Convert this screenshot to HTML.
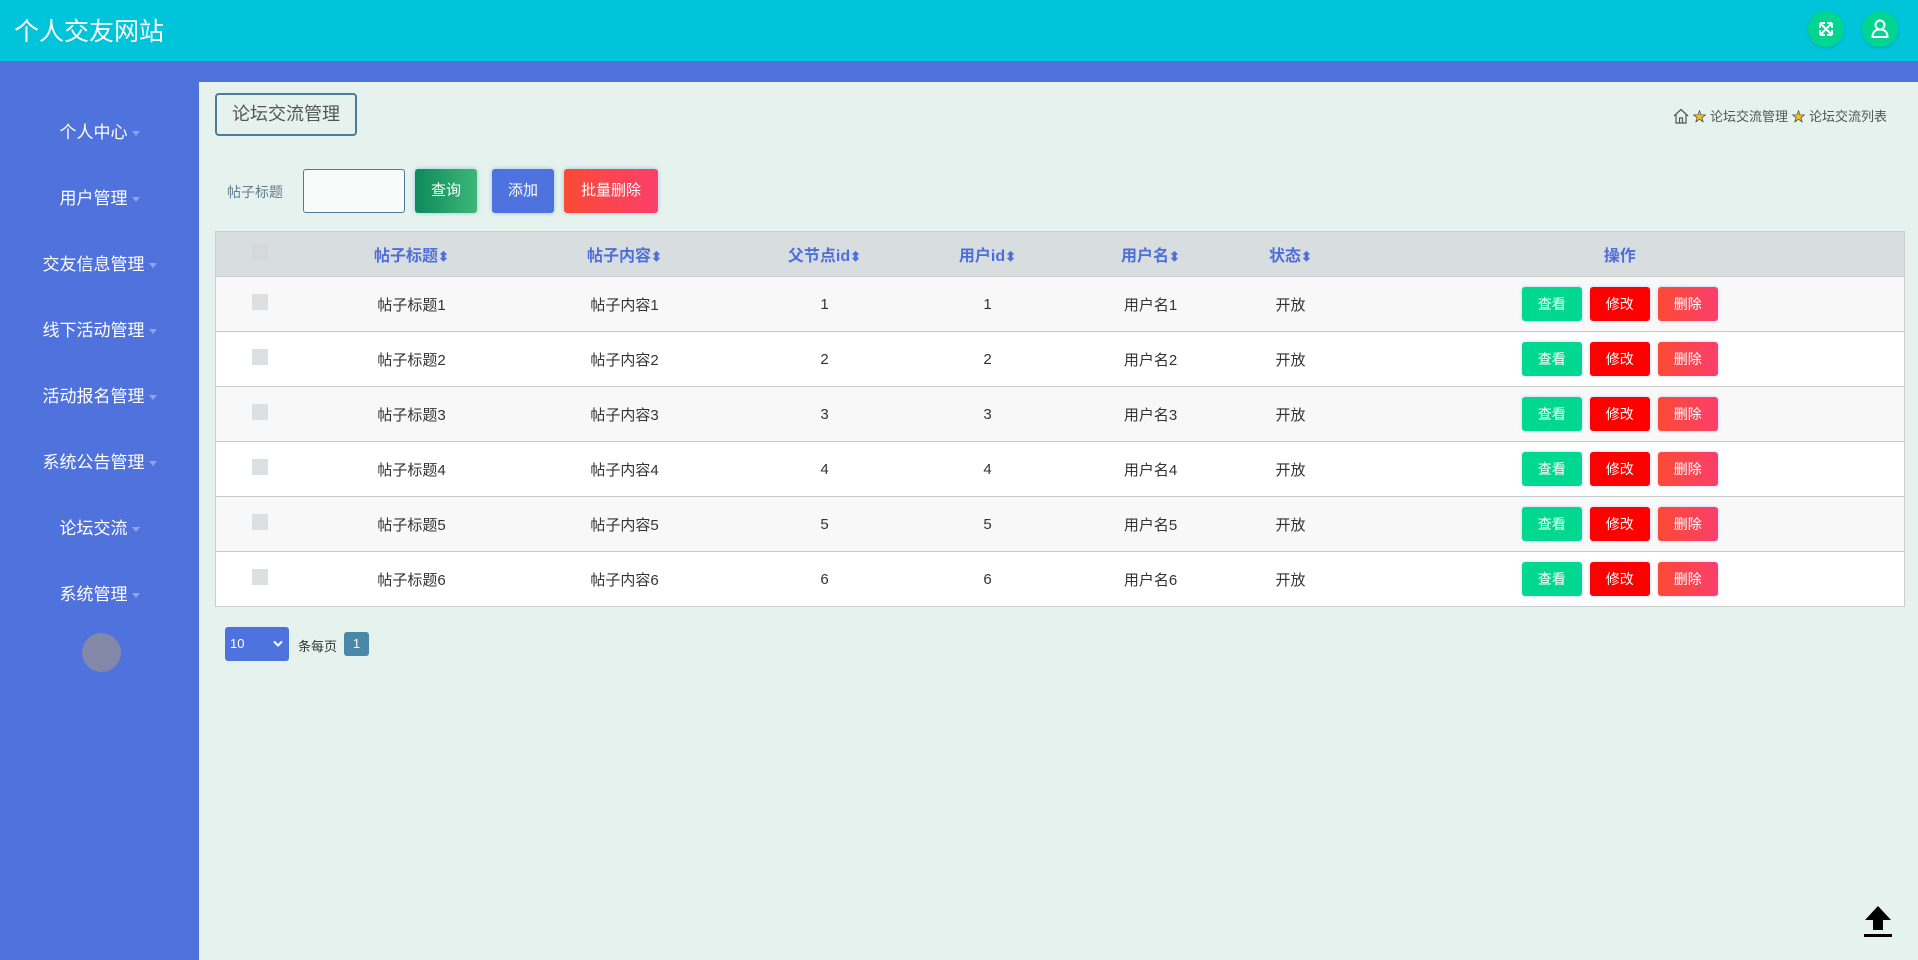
<!DOCTYPE html>
<html><head><meta charset="utf-8"><style>
*{box-sizing:border-box;margin:0;padding:0}
body{width:1918px;height:960px;overflow:hidden;font-family:"Liberation Sans","Noto Sans CJK SC",sans-serif;background:#e6f2ed;position:relative}
.hdr{position:absolute;left:0;top:0;width:1918px;height:61px;background:#00c4da}
.hdr .t{position:absolute;left:14px;top:12px;font-size:25px;color:#fff}
.ic{position:absolute;top:11px;width:36px;height:36px;border-radius:50%;background:#00d690;box-shadow:0 1px 3px rgba(0,0,0,.15)}
.strip{position:absolute;left:0;top:61px;width:1918px;height:21px;background:#5072dc}
.side{position:absolute;left:0;top:61px;width:199px;height:899px;background:#5072dc}
.side div{position:absolute;left:0;width:199px;text-align:center;color:#fff;font-size:17px}
.side div:after{content:"";display:inline-block;margin-left:4px;vertical-align:middle;border:4px solid transparent;border-top:5px solid #8fa6e6;border-bottom:0}
.cur{position:absolute;left:82px;top:633px;width:39px;height:39px;border-radius:50%;background:#8388a8}
.bc{position:absolute;left:215px;top:93px;width:142px;height:43px;border:2px solid #4d7d99;border-radius:4px;font-size:18px;color:#555;text-align:center;line-height:39px}
.crumb{position:absolute;right:31px;top:106px;font-size:13px;color:#555;display:flex;align-items:center;gap:4px}
.crumb i{font-style:normal;color:#f0c020;font-size:13px;-webkit-text-stroke:.6px #333}
.lbl{position:absolute;left:227px;top:182px;font-size:14px;color:#5f7f90}
.inp{position:absolute;left:303px;top:169px;width:102px;height:44px;border:1px solid #4d7d99;border-radius:3px;background:#f8fbfa}
.btn{position:absolute;top:169px;height:44px;color:#fff;font-size:15px;text-align:center;line-height:44px;border-radius:3px;box-shadow:0 0 4px rgba(80,160,220,.5)}
table{position:absolute;left:215px;top:231px;width:1690px;border-collapse:collapse;border:1px solid #c9ccce}
th{height:45px;background:#d8dde0;color:#4e6fd9;font-size:16px;font-weight:bold}
th span{font-size:13px}
td{height:55px;text-align:center;font-size:15px;color:#333;border-top:1px solid #c9ccce}
tr:nth-child(odd) td{background:#fff}
tr:nth-child(even) td{background:#f8f8f8}
.cb{display:inline-block;width:16px;height:16px;background:#dde0e3}
.b{display:inline-block;width:60px;height:34px;line-height:34px;color:#fff;font-size:14px;border-radius:3px;margin:0 4px;box-shadow:0 0 3px rgba(120,140,255,.4)}
.sel{position:absolute;left:225px;top:627px;width:64px;height:34px;background:#4e73df;border-radius:3px;color:#fff;font-size:13px;line-height:34px;padding-left:5px}
.pg{position:absolute;left:344px;top:632px;width:25px;height:24px;background:#4a88a8;border-radius:3px;color:#fff;font-size:13px;text-align:center;line-height:24px}
</style></head><body>
<div class="hdr"><div class="t">个人交友网站</div>
<div class="ic" style="left:1808px"><svg width="36" height="36" viewBox="0 0 36 36" fill="none" stroke="#fff" stroke-width="2"><path d="M12.5 12.5l11 11M23.5 12.5l-11 11M12 12h5M12 12v5M24 24h-5M24 24v-5M24 12h-5M24 12v5M12 24h5M12 24v-5"/></svg></div>
<div class="ic" style="left:1862px"><svg width="36" height="36" viewBox="0 0 36 36" fill="none" stroke="#fff" stroke-width="2"><circle cx="18" cy="14" r="4.5"/><path d="M10.5 26c0-5 3-7.5 7.5-7.5s7.5 2.5 7.5 7.5z"/></svg></div>
</div>
<div class="strip"></div>
<div class="side">
<div style="top:57px">个人中心</div><div style="top:123px">用户管理</div><div style="top:189px">交友信息管理</div><div style="top:255px">线下活动管理</div><div style="top:321px">活动报名管理</div><div style="top:387px">系统公告管理</div><div style="top:453px">论坛交流</div><div style="top:519px">系统管理</div>
</div>
<div class="cur"></div>
<div class="bc">论坛交流管理</div>
<div class="crumb"><svg width="16" height="16" viewBox="0 0 16 16" fill="none" stroke="#555" stroke-width="1.2"><path d="M1 8L8 1.5 15 8M3 6.5V15h10V6.5M6.5 15v-5h3v5"/></svg><i>★</i>论坛交流管理 <i>★</i>论坛交流列表</div>
<div class="lbl">帖子标题</div>
<div class="inp"></div>
<div class="btn" style="left:415px;width:62px;background:linear-gradient(90deg,#0b8a5c,#3fb77a)">查询</div>
<div class="btn" style="left:492px;width:62px;background:#4e73df">添加</div>
<div class="btn" style="left:564px;width:94px;background:linear-gradient(90deg,#fb4a35,#fb3f6b)">批量删除</div>
<table>
<tr><th style="width:88px"><span class="cb" style="background:#d5d9dc"></span></th><th style="width:216px">帖子标题<span>⬍</span></th><th style="width:210px">帖子内容<span>⬍</span></th><th style="width:190px">父节点id<span>⬍</span></th><th style="width:136px">用户id<span>⬍</span></th><th style="width:190px">用户名<span>⬍</span></th><th style="width:90px">状态<span>⬍</span></th><th>操作</th></tr>
<tr><td><span class="cb"></span></td><td>帖子标题1</td><td>帖子内容1</td><td>1</td><td>1</td><td>用户名1</td><td>开放</td><td><span class="b" style="background:#00d890">查看</span><span class="b" style="background:#f00">修改</span><span class="b" style="background:linear-gradient(90deg,#fb4a35,#fb3f6b)">删除</span></td></tr>
<tr><td><span class="cb"></span></td><td>帖子标题2</td><td>帖子内容2</td><td>2</td><td>2</td><td>用户名2</td><td>开放</td><td><span class="b" style="background:#00d890">查看</span><span class="b" style="background:#f00">修改</span><span class="b" style="background:linear-gradient(90deg,#fb4a35,#fb3f6b)">删除</span></td></tr>
<tr><td><span class="cb"></span></td><td>帖子标题3</td><td>帖子内容3</td><td>3</td><td>3</td><td>用户名3</td><td>开放</td><td><span class="b" style="background:#00d890">查看</span><span class="b" style="background:#f00">修改</span><span class="b" style="background:linear-gradient(90deg,#fb4a35,#fb3f6b)">删除</span></td></tr>
<tr><td><span class="cb"></span></td><td>帖子标题4</td><td>帖子内容4</td><td>4</td><td>4</td><td>用户名4</td><td>开放</td><td><span class="b" style="background:#00d890">查看</span><span class="b" style="background:#f00">修改</span><span class="b" style="background:linear-gradient(90deg,#fb4a35,#fb3f6b)">删除</span></td></tr>
<tr><td><span class="cb"></span></td><td>帖子标题5</td><td>帖子内容5</td><td>5</td><td>5</td><td>用户名5</td><td>开放</td><td><span class="b" style="background:#00d890">查看</span><span class="b" style="background:#f00">修改</span><span class="b" style="background:linear-gradient(90deg,#fb4a35,#fb3f6b)">删除</span></td></tr>
<tr><td><span class="cb"></span></td><td>帖子标题6</td><td>帖子内容6</td><td>6</td><td>6</td><td>用户名6</td><td>开放</td><td><span class="b" style="background:#00d890">查看</span><span class="b" style="background:#f00">修改</span><span class="b" style="background:linear-gradient(90deg,#fb4a35,#fb3f6b)">删除</span></td></tr>
</table>
<div class="sel">10<svg style="position:absolute;right:6px;top:13px" width="10" height="8" viewBox="0 0 10 8" fill="none" stroke="#fff" stroke-width="2"><path d="M1 1.5l4 4 4-4"/></svg></div>
<div style="position:absolute;left:298px;top:636px;font-size:13px;color:#333">条每页</div>
<div class="pg">1</div>
<svg style="position:absolute;left:1859px;top:903px" width="38" height="38" viewBox="0 0 38 38"><path d="M19 3L6 17h8v10h10V17h8z" fill="#000"/><rect x="5" y="31" width="28" height="3" fill="#000"/></svg>
</body></html>
